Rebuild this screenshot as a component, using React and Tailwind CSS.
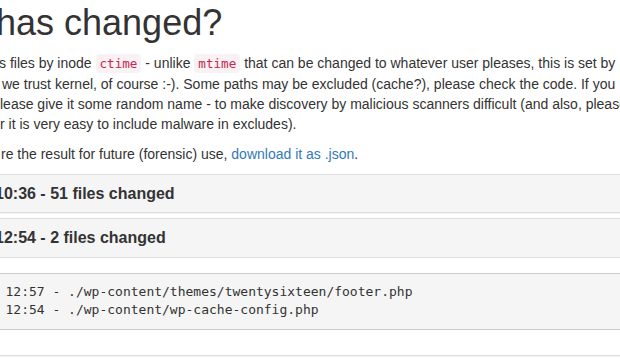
import React from 'react';

// Snapshot of a change log page, clipped to the viewport
const panels = [
  { title: '10:36 - 51 files changed', open: false, files: [] },
  {
    title: '12:54 - 2 files changed',
    open: true,
    files: [
      '12:57 - ./wp-content/themes/twentysixteen/footer.php',
      '12:54 - ./wp-content/wp-cache-config.php',
    ],
  },
];

const Code = ({ children }) => (
  <code className="font-['DejaVu_Sans_Mono',monospace] text-[12.6px] text-[#c7254e] bg-[#f9f2f4] rounded-[4px] px-[4px] py-[2px]">
    {children}
  </code>
);

const App = () => {
  return (
    <div className="w-[620px] h-[359px] overflow-hidden bg-white text-[#333] font-['Liberation_Sans',Arial,sans-serif] text-[14px] leading-[20px]">
      <h1 className="-ml-[4px] pt-[3px] mb-[10px] text-[36px] leading-[1.1] whitespace-nowrap">
        has changed?
      </h1>

      <div className="mb-[10px] whitespace-nowrap">
        <div className="-ml-[1px]">
          s files by inode <Code>ctime</Code> - unlike <Code>mtime</Code> that can be changed to whatever user pleases, this is set by
        </div>
        <div className="ml-[2px]">
          we trust kernel, of course :-). Some paths may be excluded (cache?), please check the code. If you
        </div>
        <div className="ml-[0px]">
          lease give it some random name - to make discovery by malicious scanners difficult (and also, please
        </div>
        <div className="ml-[0px]">r it is very easy to include malware in excludes).</div>
      </div>

      <div className="mb-[10px] ml-[1px] whitespace-nowrap">
        re the result for future (forensic) use,{' '}
        <a href="#" className="text-[#337ab7]">download it as .json</a>.
      </div>

      <div className="-ml-[21px] w-[700px] flex flex-col gap-[5px]">
        {panels.map((p) => (
          <div
            key={p.title}
            className="border border-[#ddd] rounded-[4px] shadow-[0_1px_1px_rgba(0,0,0,0.05)]"
          >
            <div className="bg-[#f5f5f5] px-[15px] py-[10px]">
              <h4 className="text-[16px] leading-[1.1] font-bold">{p.title}</h4>
            </div>
            {p.open && (
              <div className="border-t border-[#ddd] p-[15px]">
                <pre className="mb-[10px] bg-[#f5f5f5] border border-[#ccc] rounded-[4px] p-[9.5px] font-['DejaVu_Sans_Mono',monospace] text-[13px] leading-[18px] text-[#333]">
                  {p.files.join('\n')}
                </pre>
              </div>
            )}
          </div>
        ))}
      </div>
    </div>
  );
};

export default App;
